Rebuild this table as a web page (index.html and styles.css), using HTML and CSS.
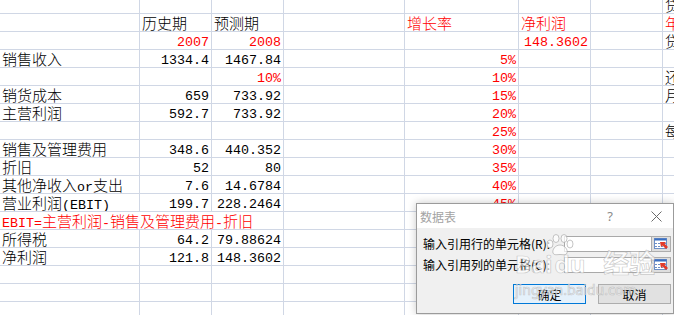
FILE: index.html
```html
<!DOCTYPE html>
<html lang="zh-CN">
<head>
<meta charset="utf-8">
<title>数据表</title>
<link rel="stylesheet" href="styles.css">
</head>
<body>
<div class="sheet">
  <div class="c"></div><div class="c"></div><div class="c"></div><div class="c"></div><div class="c"></div><div class="c"></div><div class="c"></div><div class="c h"><span>贷</span></div>
  <div class="c"></div><div class="c"><span>历史期</span></div><div class="c"><span>预测期</span></div><div class="c"></div><div class="c red"><span>增长率</span></div><div class="c red"><span>净利润</span></div><div class="c"></div><div class="c h red"><span>年</span></div>
  <div class="c"></div><div class="c n r red">2007</div><div class="c n r red">2008</div><div class="c"></div><div class="c"></div><div class="c n r red">148.3602</div><div class="c"></div><div class="c h"><span>贷</span></div>
  <div class="c"><span>销售收入</span></div><div class="c n r">1334.4</div><div class="c n r">1467.84</div><div class="c"></div><div class="c n r red">5%</div><div class="c"></div><div class="c"></div><div class="c h"></div>
  <div class="c"></div><div class="c"></div><div class="c n r red">10%</div><div class="c"></div><div class="c n r red">10%</div><div class="c"></div><div class="c"></div><div class="c h"><span>还</span></div>
  <div class="c"><span>销货成本</span></div><div class="c n r">659</div><div class="c n r">733.92</div><div class="c"></div><div class="c n r red">15%</div><div class="c"></div><div class="c"></div><div class="c h"><span>月</span></div>
  <div class="c"><span>主营利润</span></div><div class="c n r">592.7</div><div class="c n r">733.92</div><div class="c"></div><div class="c n r red">20%</div><div class="c"></div><div class="c"></div><div class="c h"></div>
  <div class="c"></div><div class="c"></div><div class="c"></div><div class="c"></div><div class="c n r red">25%</div><div class="c"></div><div class="c"></div><div class="c h"><span>每</span></div>
  <div class="c"><span>销售及管理费用</span></div><div class="c n r">348.6</div><div class="c n r">440.352</div><div class="c"></div><div class="c n r red">30%</div><div class="c"></div><div class="c"></div><div class="c h"></div>
  <div class="c"><span>折旧</span></div><div class="c n r">52</div><div class="c n r">80</div><div class="c"></div><div class="c n r red">35%</div><div class="c"></div><div class="c"></div><div class="c h"></div>
  <div class="c"><span>其他净收入<span class="lat">or</span>支出</span></div><div class="c n r">7.6</div><div class="c n r">14.6784</div><div class="c"></div><div class="c n r red">40%</div><div class="c"></div><div class="c"></div><div class="c h"></div>
  <div class="c"><span>营业利润<span class="lat">(EBIT)</span></span></div><div class="c n r">199.7</div><div class="c n r">228.2464</div><div class="c"></div><div class="c n r red">45%</div><div class="c"></div><div class="c"></div><div class="c h"></div>
  <div class="c span3 red"><span><span class="lat">EBIT=</span>主营利润<span class="lat">-</span>销售及管理费用<span class="lat">-</span>折旧</span></div><div class="c"></div><div class="c"></div><div class="c"></div><div class="c"></div><div class="c h"></div>
  <div class="c"><span>所得税</span></div><div class="c n r">64.2</div><div class="c n r">79.88624</div><div class="c"></div><div class="c"></div><div class="c"></div><div class="c"></div><div class="c h"></div>
  <div class="c"><span>净利润</span></div><div class="c n r">121.8</div><div class="c n r">148.3602</div><div class="c"></div><div class="c"></div><div class="c"></div><div class="c"></div><div class="c h"></div>
  <div class="c"></div><div class="c"></div><div class="c"></div><div class="c"></div><div class="c"></div><div class="c"></div><div class="c"></div><div class="c h"></div>
  <div class="c"></div><div class="c"></div><div class="c"></div><div class="c"></div><div class="c"></div><div class="c"></div><div class="c"></div><div class="c h"></div>
  <div class="c"></div><div class="c"></div><div class="c"></div><div class="c"></div><div class="c"></div><div class="c"></div><div class="c"></div><div class="c h"></div>
</div>

<div class="dialog">
  <div class="titlebar">
    <span class="title">数据表</span>
    <span class="help">?</span>
    <span class="close">
      <svg width="11" height="11" viewBox="0 0 11 11"><path d="M0.5 0.5 L10.5 10.5 M10.5 0.5 L0.5 10.5" stroke="#6b6b6b" stroke-width="1" fill="none"/></svg>
    </span>
  </div>
  <div class="dbody">
    <div class="field">
      <span class="label">输入引用行的单元格(R):</span>
      <span class="input"></span>
      <span class="pick">
        <svg width="15" height="12" viewBox="0 0 15 12">
          <rect x="0.5" y="0.5" width="12" height="10" fill="#ffffff" stroke="#6d8fc6"/>
          <rect x="0.5" y="0.5" width="12" height="2" fill="#3a6fc0"/>
          <path d="M1 5.5 H12 M1 8.5 H12" stroke="#6d8fc6" stroke-dasharray="2 1"/>
          <path d="M6 4 L12 4 L10.5 5.5 L14 9 L12 11 L8.5 7.5 L7 9 Z" fill="#e23b2b"/>
        </svg>
      </span>
    </div>
    <div class="field">
      <span class="label">输入引用列的单元格(C):</span>
      <span class="input"></span>
      <span class="pick">
        <svg width="15" height="12" viewBox="0 0 15 12">
          <rect x="0.5" y="0.5" width="12" height="10" fill="#ffffff" stroke="#6d8fc6"/>
          <rect x="0.5" y="0.5" width="12" height="2" fill="#3a6fc0"/>
          <path d="M1 5.5 H12 M1 8.5 H12" stroke="#6d8fc6" stroke-dasharray="2 1"/>
          <path d="M6 4 L12 4 L10.5 5.5 L14 9 L12 11 L8.5 7.5 L7 9 Z" fill="#e23b2b"/>
        </svg>
      </span>
    </div>
    <div class="buttons">
      <span class="btn primary">确定</span>
      <span class="btn">取消</span>
    </div>
  </div>
  <div class="watermark">
    <svg class="wm-paw" width="30" height="22" viewBox="0 0 30 22">
      <g fill="rgba(255,255,255,0.7)" stroke="rgba(160,160,160,0.6)" stroke-width="1">
        <ellipse cx="5" cy="10" rx="3" ry="4"/>
        <ellipse cx="11" cy="4.5" rx="3" ry="4"/>
        <ellipse cx="19" cy="4.5" rx="3" ry="4"/>
        <ellipse cx="25" cy="10" rx="3" ry="4"/>
        <path d="M15 11 C10 11 7 16 8 19 C9 21.5 12 20.5 15 20.5 C18 20.5 21 21.5 22 19 C23 16 20 11 15 11 Z"/>
      </g>
    </svg>
    <div class="wm-logo">Bai<span class="wm-du">du</span><span class="wm-cn">经验</span></div>
    <div class="wm-url">jingyan.baidu.com</div>
  </div>
</div>
</body>
</html>
```

FILE: styles.css
```css
* { box-sizing: border-box; }

html, body {
  margin: 0;
  padding: 0;
}

body {
  width: 674px;
  height: 315px;
  overflow: hidden;
  position: relative;
  background: #ffffff;
  font-family: "Noto Sans CJK SC", sans-serif;
}

/* ---------- spreadsheet ---------- */
.sheet {
  display: grid;
  grid-template-columns: 140px 72px 72px 121px 114px 72px 72px 11px;
  grid-template-rows: 14px repeat(17, 18px);
}

.c {
  display: flex;
  align-items: flex-end;
  overflow: hidden;
  white-space: nowrap;
  padding: 0 2px;
  border-right: 1px solid #d0d7e5;
  border-bottom: 1px solid #d0d7e5;
  font-size: 15px;
  line-height: 17px;
  color: #000000;
  font-weight: 300;
}

.c > span { display: block; }

.h {
  border-right: none;
  padding-right: 0;
}

.r { justify-content: flex-end; }

.red { color: #ff0000; }

.n {
  font-family: "Liberation Mono", monospace;
  font-size: 13.33px;
  line-height: 12px;
  font-weight: 400;
}

.lat {
  font-family: "Liberation Mono", monospace;
  font-size: 13.33px;
  line-height: 0;
  font-weight: 400;
}

.span3 { grid-column: span 3; }

/* ---------- dialog ---------- */
.dialog {
  position: absolute;
  left: 416px;
  top: 203px;
  width: 258px;
  height: 111px;
  background: #f0f0f0;
  border: 1px solid #9b9b9b;
  box-shadow: 0 0 8px rgba(0, 0, 0, 0.22);
  font-family: "Noto Sans CJK SC", sans-serif;
  font-size: 12px;
  color: #000000;
}

.titlebar {
  height: 24px;
  background: #ffffff;
  display: flex;
  align-items: center;
}

.title {
  flex: 1;
  padding-left: 3px;
  color: #a3a3a3;
  font-size: 12px;
}

.help {
  width: 20px;
  margin-right: 21px;
  text-align: center;
  color: #8a8a8a;
  font-family: "Noto Sans", sans-serif;
  font-size: 13px;
}

.close {
  width: 30px;
  margin-right: 2px;
  display: flex;
  justify-content: center;
  align-items: center;
}

.dbody {
  padding: 8px 2px 0 6px;
  display: flex;
  flex-direction: column;
}

.field {
  display: flex;
  align-items: center;
  height: 16px;
  margin-bottom: 5px;
}

.label {
  flex: 1;
  font-size: 12px;
  line-height: 16px;
  white-space: nowrap;
}

.input {
  width: 87px;
  height: 16px;
  background: #ffffff;
  border: 1px solid #a9a9a9;
  border-right: none;
}

.pick {
  width: 20px;
  height: 16px;
  background: #dedede;
  border: 1px solid #adadad;
  display: flex;
  align-items: center;
  justify-content: center;
}

.buttons {
  display: flex;
  justify-content: flex-end;
  gap: 12px;
  margin-top: 6px;
}

.btn {
  width: 73px;
  height: 20px;
  display: flex;
  align-items: center;
  justify-content: center;
  background: #e1e1e1;
  border: 1px solid #adadad;
  font-size: 12px;
}

.btn.primary {
  background: #e5f1fb;
  border-color: #0078d7;
}

/* ---------- watermark overlay ---------- */
.watermark {
  position: absolute;
  left: 98px;
  top: 30px;
  pointer-events: none;
  color: rgba(255, 255, 255, 0.7);
  -webkit-text-stroke: 0.7px rgba(160, 160, 160, 0.55);
  font-family: "Noto Sans", sans-serif;
  font-weight: 700;
}

.wm-paw {
  display: block;
  margin-left: 30px;
  margin-bottom: -8px;
}

.wm-logo {
  font-size: 24px;
  line-height: 28px;
  display: flex;
  align-items: baseline;
}

.wm-du { margin-left: 2px; }

.wm-cn {
  margin-left: 18px;
  font-family: "Noto Sans CJK SC", sans-serif;
  font-size: 26px;
}

.wm-url {
  font-size: 14px;
  line-height: 16px;
  margin-top: 4px;
  font-weight: 400;
}
```
